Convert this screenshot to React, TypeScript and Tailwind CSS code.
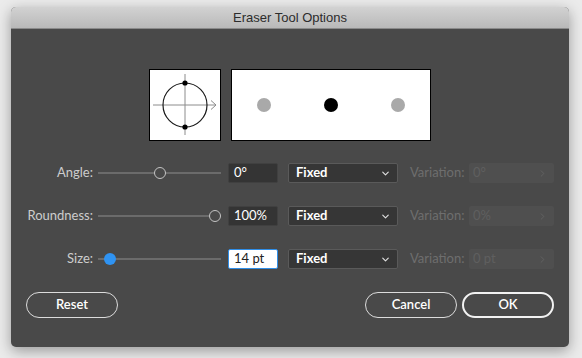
import { ChevronDown, ChevronRight } from "lucide-react";

const font = { fontFamily: "Lato, 'Open Sans', sans-serif" };

const rows = [
  { label: "Angle:", value: "0°", thumb: "ring", pos: 50, variation: "0°" },
  { label: "Roundness:", value: "100%", thumb: "ring", pos: 100, variation: "0%" },
  { label: "Size:", value: "14 pt", thumb: "blue", pos: 5, variation: "0 pt", focused: true },
];

function Slider({ pos, thumb }: { pos: number; thumb: string }) {
  // thumb center moves between 6px and 117px of the 123px track
  const left = 6 + (111 * pos) / 100;
  return (
    <div className="relative ml-[5px] h-[20px] w-[123px]">
      <div className="absolute left-0 right-0 top-[9px] h-[2px] bg-[#6b6b6b]" />
      {thumb === "blue" ? (
        <div
          className="absolute top-[4px] h-[12px] w-[12px] -translate-x-1/2 rounded-full bg-[#2f93f2]"
          style={{ left }}
        />
      ) : (
        <div
          className="absolute top-[4px] h-[12px] w-[12px] -translate-x-1/2 rounded-full border-[1.5px] border-[#c4c4c4] bg-[#494949]"
          style={{ left }}
        />
      )}
    </div>
  );
}

function Row({ r }: { r: (typeof rows)[number] }) {
  return (
    <div className="flex h-[20px] items-center">
      <div className="w-[82px] text-right text-[13px] text-[#cdcdcd]">{r.label}</div>
      <Slider pos={r.pos} thumb={r.thumb} />
      {r.focused ? (
        <div className="ml-[7px] flex h-[20px] w-[50px] items-center rounded-[2px] border border-[#2f8ee8] bg-white pl-[5px] text-[13px] text-[#222]">
          {r.value}
        </div>
      ) : (
        <div className="ml-[7px] flex h-[20px] w-[50px] items-center rounded-[2px] border border-[#404040] bg-[#343434] pl-[5px] text-[13px] text-white">
          {r.value}
        </div>
      )}
      <div className="ml-[10px] flex h-[20px] w-[110px] items-center justify-between rounded-[2px] border border-[#5a5a5a] bg-[#363636] pl-[7px] pr-[6px] text-[13px] font-bold text-white">
        <span>Fixed</span>
        <ChevronDown size={11} strokeWidth={2.5} className="text-[#e0e0e0]" />
      </div>
      <div className="ml-[12px] w-[59px] text-[13px] text-[#6e6e6e]">Variation:</div>
      <div className="flex h-[20px] w-[85px] items-center justify-between rounded-[2px] bg-[#4f4f4f] pl-[4px] pr-[6px] text-[13px] text-[#5f5f5f]">
        <span>{r.variation}</span>
        <ChevronRight size={11} strokeWidth={2} className="text-[#636363]" />
      </div>
    </div>
  );
}

export default function App() {
  return (
    <div className="h-[358px] w-[582px] bg-[#ebebeb] pl-[11px] pt-[7px]" style={font}>
      <div className="h-[340px] w-[558px] overflow-hidden rounded-[5px] bg-[#494949] shadow-[0_4px_14px_rgba(0,0,0,0.35)]">
        <div
          className="flex h-[22px] items-center justify-center border-b border-[#8a8a8a] bg-gradient-to-b from-[#d2d2d2] to-[#b9b9b9] text-[13px] text-[#2c2c2c]"
          style={{ fontFamily: "'Liberation Sans', Arial, sans-serif" }}
        >
          Eraser Tool Options
        </div>

        <div className="mt-[40px] flex justify-center gap-[10px]">
          <div className="h-[72px] w-[72px] border border-black bg-white">
            <svg width="70" height="70" viewBox="0 0 70 70">
              <line x1="3" y1="35" x2="66" y2="35" stroke="#8c8c8c" strokeWidth="1" />
              <polyline points="61,30.5 66,35 61,39.5" fill="none" stroke="#8c8c8c" strokeWidth="1" />
              <line x1="35" y1="4" x2="35" y2="65" stroke="#8c8c8c" strokeWidth="1" />
              <circle cx="35" cy="35" r="22" fill="none" stroke="#1a1a1a" strokeWidth="1.2" />
              <circle cx="35" cy="13" r="2.6" fill="#000" />
              <circle cx="35" cy="57" r="2.6" fill="#000" />
            </svg>
          </div>
          <div className="flex h-[72px] w-[200px] items-center justify-between border border-black bg-white px-[25px]">
            <div className="h-[14px] w-[14px] rounded-full bg-[#a9a9a9]" />
            <div className="h-[14px] w-[14px] rounded-full bg-black" />
            <div className="h-[14px] w-[14px] rounded-full bg-[#a9a9a9]" />
          </div>
        </div>

        <div className="mt-[22px] flex flex-col gap-[23px]">
          {rows.map((r) => (
            <Row key={r.label} r={r} />
          ))}
        </div>

        <div className="mt-[23px] flex items-center px-[15px] text-[13px] font-semibold text-white">
          <button className="h-[26px] w-[92px] rounded-full border border-[#dcdcdc]">Reset</button>
          <div className="flex-1" />
          <button className="h-[26px] w-[92px] rounded-full border border-[#dcdcdc]">Cancel</button>
          <button className="ml-[5px] h-[26px] w-[92px] rounded-full border-2 border-[#f2f2f2]">OK</button>
        </div>
      </div>
    </div>
  );
}
